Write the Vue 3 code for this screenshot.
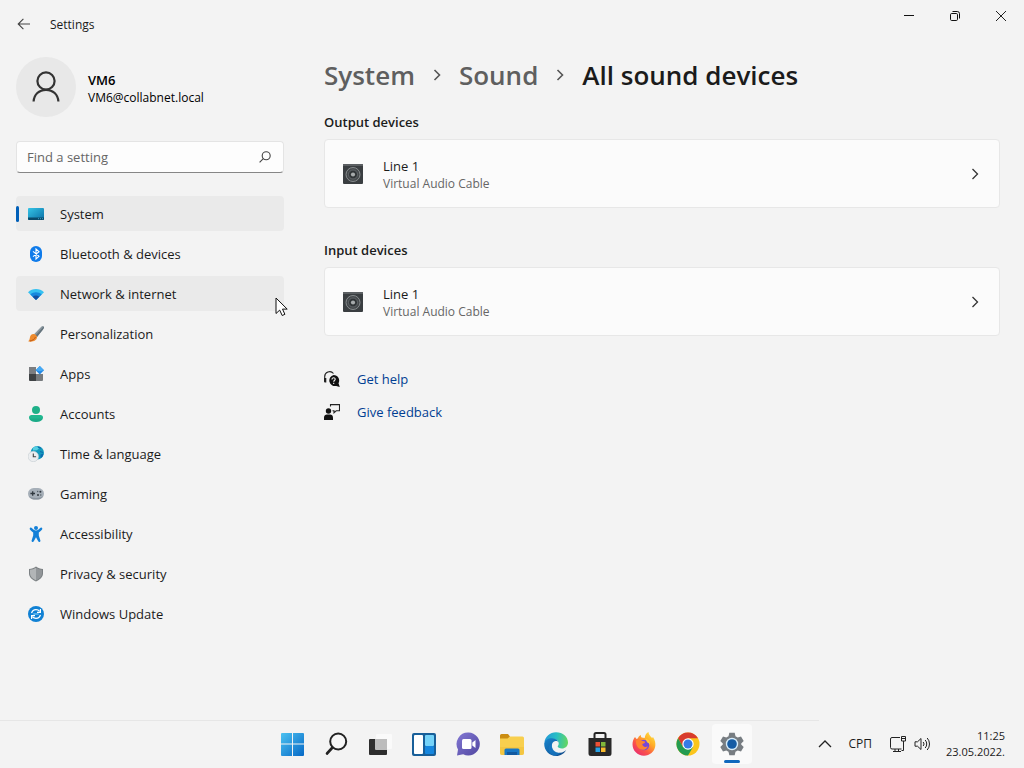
<template>
  <div class="desktop">
    <header class="title-bar">
      <button class="back-button" aria-label="Back">
        <svg viewBox="0 0 14 14" width="14" height="14" fill="none" stroke="#444" stroke-width="1.1">
          <path d="M13 7H1.2M6.4 1.8L1.2 7l5.2 5.2" />
        </svg>
      </button>
      <span class="window-title">Settings</span>
      <div class="window-controls">
        <button aria-label="Minimize">
          <svg viewBox="0 0 12 12" width="12" height="12" stroke="#111" fill="none">
            <path d="M1 5.5h10" />
          </svg>
        </button>
        <button aria-label="Restore">
          <svg viewBox="0 0 12 12" width="12" height="12" stroke="#111" fill="none">
            <rect x="1.5" y="3.5" width="7" height="7" rx="1.2" />
            <path d="M3.5 1.5h4.8a2.2 2.2 0 0 1 2.2 2.2v4.8" />
          </svg>
        </button>
        <button aria-label="Close">
          <svg viewBox="0 0 12 12" width="12" height="12" stroke="#222" fill="none">
            <path d="M1 1l10 10M11 1L1 11" />
          </svg>
        </button>
      </div>
    </header>

    <div class="window-body">
      <aside class="sidebar">
        <div class="account">
          <div class="avatar">
            <svg viewBox="0 0 30 32" width="30" height="32" fill="none" stroke="#333" stroke-width="2.2">
              <circle cx="15" cy="10" r="8.6" />
              <path d="M2.6 30.5C3 23.5 8 18.8 15 18.8s12 4.7 12.4 11.7" />
            </svg>
          </div>
          <div class="account-text">
            <strong>{{ account.name }}</strong>
            <span>{{ account.email }}</span>
          </div>
        </div>

        <div class="search-box">
          <input v-model="query" type="text" placeholder="Find a setting" aria-label="Find a setting" />
          <svg viewBox="0 0 12 12" width="12" height="12" fill="none" stroke="#444" stroke-width="1.1">
            <circle cx="7.2" cy="4.8" r="4" />
            <path d="M4.3 7.7L.6 11.4" />
          </svg>
        </div>

        <nav class="nav-list">
          <a
            v-for="item in navItems"
            :key="item.icon"
            href="#"
            class="nav-item"
            :class="{ active: item.icon === activeItem, hovered: item.icon === hoveredItem }"
            @click.prevent="activeItem = item.icon"
          >
            <svg viewBox="0 0 16 16" width="16" height="16">
              <template v-if="item.icon === 'system'">
                <defs>
                  <linearGradient id="sys" x1="0" y1="0" x2="1" y2="1">
                    <stop offset="0" stop-color="#35c4e6" />
                    <stop offset="1" stop-color="#0a6fa6" />
                  </linearGradient>
                </defs>
                <rect y="2" width="16" height="12" rx="1" fill="url(#sys)" />
                <path d="M0 11.5h16V13a1 1 0 0 1-1 1H1a1 1 0 0 1-1-1z" fill="#0a4a6b" />
                <path d="M10 12.7h1M12 12.7h1M14 12.7h1" stroke="#45b7dc" stroke-width=".8" />
              </template>
              <template v-else-if="item.icon === 'bluetooth'">
                <rect x="2" width="12" height="16" rx="6" fill="#0f7bea" />
                <path d="M5 5.3l6 5-3 2.7V3l3 2.7-6 5" fill="none" stroke="#fff" stroke-width="1.1" />
              </template>
              <template v-else-if="item.icon === 'network'">
                <path d="M0 6.2C4.4 1.8 11.6 1.8 16 6.200L8 14z" fill="#35c1f1" />
                <path d="M2.300 8.500c3.200-3.100 8.200-3.100 11.400 0L8 14z" fill="#1688dd" />
                <path d="M4.700 10.800c1.900-1.800 4.700-1.800 6.600 0L8 14z" fill="#144fa0" />
              </template>
              <template v-else-if="item.icon === 'brush'">
                <path d="M15.600.4c.8.8.2 2.100-.6 3.200L9 11 6 8.200 12.800 1.200c1-.9 2.100-1.500 2.800-.8z" fill="#8b98a0" />
                <path d="M15.600.4c.8.8.2 2.100-.6 3.200L9 11 7.500 9.600z" fill="#64737c" />
                <path d="M5.500 8c2 .1 3.600 1.600 3.500 3.500C8.700 14.500 4.500 16.500 0 15.300c1.800-.8 1.500-2.300 2-4.300C2.500 9.200 3.900 7.900 5.500 8z" fill="#ed8b2e" />
                <path d="M1.800 15c2.700-.4 4.700-1.700 5.700-4" stroke="#bd5918" fill="none" />
              </template>
              <template v-else-if="item.icon === 'apps'">
                <path d="M1 1h7v7H1z" fill="#7b7d80" />
                <path d="M1 8h7v7H2a1 1 0 0 1-1-1z" fill="#3f4244" />
                <path d="M8 8h7v6a1 1 0 0 1-1 1H8z" fill="#777b7e" />
                <path d="M11.800 0l4.200 4.200-4.200 4.200-4.200-4.200z" fill="#2388e5" />
                <path d="M11.800 0l4.200 4.200-4.200 1-4.200-1z" fill="#45aaf5" />
              </template>
              <template v-else-if="item.icon === 'accounts'">
                <circle cx="8" cy="4" r="4" fill="#1eb088" />
                <path d="M3.500 9h9C14 9 15 10 15 11.300 15 14 12.200 16 8 16s-7-2-7-4.700C1 10 2 9 3.500 9z" fill="#20b78f" />
                <path d="M1.300 12.500C2.100 14.700 4.600 16 8 16s5.900-1.300 6.700-3.500z" fill="#159f80" opacity=".5" />
              </template>
              <template v-else-if="item.icon === 'time'">
                <circle cx="9.300" cy="6.700" r="6.700" fill="#159bbd" />
                <path d="M5 1.500l4-1.300 2 2-2 2-4 .4z" fill="#56cfe1" />
                <path d="M12.500 8.500l3-1-.8 3-2.200 1.500z" fill="#0b6baf" />
                <path d="M10 1l3 1.300M12 5.500l3 1" stroke="#0b6baf" stroke-width="1.200" />
                <circle cx="5.300" cy="10.500" r="5.200" fill="#eceef0" stroke="#c3cbd0" stroke-width=".6" />
                <path d="M5.300 7.500v3.300h2.800" fill="none" stroke="#444" stroke-width="1.100" />
              </template>
              <template v-else-if="item.icon === 'gaming'">
                <rect y="2" width="16" height="11.500" rx="5.700" fill="#a6afb8" />
                <path d="M1 10c2.500 2.600 11.500 2.600 14 0-1 2.300-3 3.500-5 3.500H6c-2 0-4-1.200-5-3.500z" fill="#8a949e" />
                <path d="M4.700 5.200v4.600M2.400 7.500H7" stroke="#30383f" stroke-width="1.300" />
                <circle cx="10" cy="9" r="1" fill="#30383f" />
                <circle cx="12.400" cy="5.800" r="1" fill="#30383f" />
                <circle cx="9.700" cy="5.500" r=".7" fill="#4e5962" />
                <circle cx="12.800" cy="9" r=".7" fill="#4e5962" />
              </template>
              <template v-else-if="item.icon === 'accessibility'">
                <circle cx="8" cy="2" r="2" fill="#1380d8" />
                <path d="M2.200 1.700c.8-.3 1.300 0 1.900.6C5.100 3.500 6.300 4.400 8 4.400s2.900-.9 3.900-2.100c.6-.6 1.100-.9 1.900-.6.7.5.7 1.300.1 2-1 1.200-2 2.100-3.100 2.700v3l1.600 5c.3 1.400-1.500 2.200-2.200.8L8 11.200l-2.200 4c-.7 1.400-2.500.6-2.200-.8l1.600-5v-3c-1.100-.6-2.100-1.500-3.100-2.700-.6-.7-.6-1.500.1-2z" fill="#1380d8" />
              </template>
              <template v-else-if="item.icon === 'privacy'">
                <path d="M8 .5c2 1.500 4.300 2.200 7 2.400v4.600c0 3.500-3 6.200-7 8-4-1.800-7-4.500-7-8V2.900C3.700 2.700 6 2 8 .5z" fill="#7b8083" />
                <path d="M8 1.700c1.800 1.200 3.800 1.900 6 2.100v3.700c0 3-2.500 5.200-6 6.900z" fill="#929699" />
                <path d="M8 1.700C6.200 2.900 4.200 3.600 2 3.800v3.700c0 3 2.500 5.200 6 6.900z" fill="#b2b5b7" />
              </template>
              <template v-else>
                <circle cx="8" cy="8" r="8" fill="#1181d4" />
                <path d="M3.600 7.200C4.200 4.900 5.900 3.700 8 3.700c1.500 0 2.800.6 3.700 1.700M12.400 8.800c-.6 2.300-2.300 3.500-4.400 3.500-1.500 0-2.800-.6-3.700-1.700" fill="none" stroke="#fff" stroke-width="1.300" />
                <path d="M12.400 3v3.300H9M3.600 13V9.700H7" fill="none" stroke="#fff" stroke-width="1.200" />
                <path d="M5.300 8h5.400" stroke="#75c4f5" stroke-width="1.400" />
              </template>
            </svg>
            <span>{{ item.label }}</span>
          </a>
        </nav>

        <svg class="cursor" viewBox="0 0 13 20" width="13" height="20">
          <path d="M1 1v15.500l3.700-3.400 2.500 5.400 2.700-1.200-2.400-5.200h4.700z" fill="#fff" stroke="#111" />
        </svg>
      </aside>

      <main class="content">
        <h1 class="breadcrumb">
          <a href="#">System</a>
          <svg viewBox="0 0 8 14" width="8" height="14"><path d="M1.500 2l5 5-5 5" /></svg>
          <a href="#">Sound</a>
          <svg viewBox="0 0 8 14" width="8" height="14"><path d="M1.500 2l5 5-5 5" /></svg>
          <span>All sound devices</span>
        </h1>

        <section v-for="group in deviceGroups" :key="group.title" class="device-group">
          <h2>{{ group.title }}</h2>
          <button class="device-card">
            <svg viewBox="0 0 20 20" width="20" height="20">
              <rect width="20" height="20" rx="1" fill="#3a3e41" />
              <path d="M0 1a1 1 0 0 1 1-1h18a1 1 0 0 1 1 1v1H0z" fill="#5b5f62" />
              <circle cx="10" cy="10.500" r="7" fill="#45494c" stroke="#8d9294" stroke-width=".9" />
              <circle cx="10" cy="10.500" r="4.500" fill="#303437" stroke="#6b7073" stroke-width=".8" />
              <circle cx="10" cy="10.500" r="2.100" fill="#a6aaac" />
            </svg>
            <span class="device-text">
              <span class="device-name">{{ group.device }}</span>
              <span class="device-driver">{{ group.driver }}</span>
            </span>
            <svg viewBox="0 0 8 14" width="8" height="14" fill="none" stroke="#333" stroke-width="1.300">
              <path d="M1.500 2l5 5-5 5" />
            </svg>
          </button>
        </section>

        <div class="help-links">
          <a href="#">
            <svg viewBox="0 0 16 16" width="16" height="16">
              <path d="M.7 9.500V6A5 5 0 0 1 9.500 2.500" fill="none" stroke="#222" stroke-width="1.100" />
              <path d="M0 7h2.300v4.500H1a1 1 0 0 1-1-1z" fill="#222" />
              <path d="M9.600 4a5.600 5.600 0 0 1 4.900 8.300L15.800 16l-3.600-1.100A5.600 5.600 0 1 1 9.600 4z" fill="#111" />
              <path d="M8 8.400c0-2.200 3.300-2 3.200-.1 0 1.200-1.500 1.200-1.500 2.500M9.700 11.700v1.200" fill="none" stroke="#f3f3f3" stroke-width="1.100" />
            </svg>
            <span>Get help</span>
          </a>
          <a href="#">
            <svg viewBox="0 0 16 16" width="16" height="16">
              <circle cx="4.500" cy="7" r="2.700" fill="#111" />
              <path d="M0 16v-2.500C0 11.600 1.300 10.500 3 10.500h3c1.700 0 3 1.100 3 3V16z" fill="#111" />
              <path d="M6.500 2.500V.6h9v6.200h-3.300L10 8.800v-2H8.500" fill="none" stroke="#222" stroke-width="1.100" />
            </svg>
            <span>Give feedback</span>
          </a>
        </div>
      </main>
    </div>

    <footer class="taskbar">
      <div class="task-icons">
        <button aria-label="Start">
          <svg viewBox="0 0 24 24" width="24" height="24">
            <defs>
              <linearGradient id="win" x1="0" y1="0" x2="1" y2="1">
                <stop offset="0" stop-color="#4cc2f1" />
                <stop offset="1" stop-color="#0668c6" />
              </linearGradient>
            </defs>
            <path d="M2 1h10v10.500H1V2a1 1 0 0 1 1-1zM13 1h10a1 1 0 0 1 1 1v9.500H13zM1 12.500h11V24H2a1 1 0 0 1-1-1zM13 12.500h11V23a1 1 0 0 1-1 1H13z" fill="url(#win)" />
          </svg>
        </button>
        <button aria-label="Search">
          <svg viewBox="0 0 24 24" width="24" height="24" fill="none" stroke="#222">
            <circle cx="14.200" cy="9.500" r="8" fill="#f7f7f7" stroke-width="2" />
            <path d="M8.500 15.500l-5.500 6" stroke-width="2.600" stroke-linecap="round" />
          </svg>
        </button>
        <button aria-label="Task view">
          <svg viewBox="0 0 24 24" width="24" height="24">
            <rect x="8" y="2" width="16" height="15" rx="1" fill="#fff" opacity=".6" />
            <rect x="1" y="7" width="18" height="16" rx="1" fill="#2d2d2d" />
            <path d="M7 7h12v11H8a1 1 0 0 1-1-1z" fill="#bcbcbc" />
          </svg>
        </button>
        <button aria-label="Widgets">
          <svg viewBox="0 0 24 24" width="24" height="24">
            <rect width="24" height="23" y="1" rx="2" fill="#185f99" />
            <rect x="2" y="3" width="9" height="19" rx="1" fill="#fff" />
            <rect x="13" y="3" width="9" height="11" rx="1" fill="#75d3f9" />
            <rect x="13" y="14" width="9" height="8" rx="1" fill="#1687df" />
          </svg>
        </button>
        <button aria-label="Chat">
          <svg viewBox="0 0 24 24" width="24" height="24">
            <defs>
              <linearGradient id="chat" x1="0" y1="0" x2="1" y2="1">
                <stop offset="0" stop-color="#8378d4" />
                <stop offset="1" stop-color="#5147a0" />
              </linearGradient>
            </defs>
            <path d="M12.500.5A11.500 11.500 0 1 1 7.200 22.300L1 23.500l1-6A11.500 11.500 0 0 1 12.500.5z" fill="url(#chat)" />
            <rect x="6" y="7" width="9.500" height="10" rx="1.500" fill="#fff" />
            <path d="M16.300 10.500L19.500 8v8l-3.200-2.500z" fill="#fff" />
          </svg>
        </button>
        <button aria-label="File Explorer">
          <svg viewBox="0 0 24 24" width="24" height="24">
            <path d="M0 3.500A1.500 1.500 0 0 1 1.500 2H8l2 2.500L8 7H0z" fill="#cb8d12" />
            <path d="M0 6.500h7.500L10 4.500h12.500A1.500 1.500 0 0 1 24 6v15a2 2 0 0 1-2 2H2a2 2 0 0 1-2-2z" fill="#f8cf4e" />
            <path d="M0 15h24v6a2 2 0 0 1-2 2H2a2 2 0 0 1-2-2z" fill="#f2bf39" opacity=".6" />
            <path d="M4.500 23v-5a1.500 1.500 0 0 1 1.500-1.500h12a1.500 1.500 0 0 1 1.500 1.500v5z" fill="#1877c5" />
            <path d="M7 20h10v3H7z" fill="#12599f" />
          </svg>
        </button>
        <button aria-label="Edge">
          <svg viewBox="0 0 24 24" width="24" height="24">
            <defs>
              <linearGradient id="edgeTop" x1="0" y1=".3" x2="1" y2=".4">
                <stop offset="0" stop-color="#2498d8" />
                <stop offset=".5" stop-color="#27bec5" />
                <stop offset="1" stop-color="#64d662" />
              </linearGradient>
              <linearGradient id="edgeLow" x1="0" y1="0" x2="1" y2="1">
                <stop offset="0" stop-color="#1685cf" />
                <stop offset="1" stop-color="#124886" />
              </linearGradient>
            </defs>
            <path d="M.4 10.500C1 4.500 6 .2 12 .2c7 0 12 4.800 12 10.200 0 3.700-2.800 6-6 6-2.500 0-4.300-.9-4.300-1.900 0-.6 1-1.100 1-3 0-2.300-2.200-4.400-5.800-4.400-4.500 0-7.700 2-8.500 3.400z" fill="url(#edgeTop)" />
            <path d="M.2 11.500C.8 8 4.500 6 8 6.200c3.700.2 6 2 6.600 4.200-.6-1-1.800-1.500-3-1.400-2.300.2-3.800 2.200-3.800 5 0 4.500 4 7.600 8.700 6.800 2.200-.4 4.200-1.400 5.700-2.800-2 3.600-5.600 6-10 6C5.500 24 0 18.500.2 11.500z" fill="url(#edgeLow)" />
            <path d="M8 12c-.8 5.500 3.300 9 8.500 8.800-1.600 1.700-3.700 2.800-6 3C5.800 22.600 3 17.500 5.500 13.500 6.200 12.500 7 12 8 12z" fill="#1679c4" opacity=".7" />
          </svg>
        </button>
        <button aria-label="Store">
          <svg viewBox="0 0 24 24" width="24" height="24">
            <path d="M6.500 7V2.500A1.500 1.500 0 0 1 8 1h8a1.500 1.500 0 0 1 1.500 1.500V7" fill="none" stroke="#252525" stroke-width="2" />
            <path d="M.5 6h23v15.500A2.500 2.500 0 0 1 21 24H3a2.500 2.500 0 0 1-2.500-2.500z" fill="#292929" />
            <path d="M7.500 10H12v4.500H7.500z" fill="#ed5136" />
            <path d="M13 10h4.500v4.500H13z" fill="#80b83b" />
            <path d="M7.500 15.500H12V20H7.500z" fill="#27a1e5" />
            <path d="M13 15.500h4.500V20H13z" fill="#f8ba2d" />
          </svg>
        </button>
        <button aria-label="Firefox">
          <svg viewBox="0 0 24 24" width="24" height="24">
            <defs>
              <linearGradient id="fox" x1="1" y1="0" x2=".2" y2="1">
                <stop offset="0" stop-color="#fff04a" />
                <stop offset=".4" stop-color="#ffac27" />
                <stop offset=".7" stop-color="#fb5548" />
                <stop offset="1" stop-color="#e82b73" />
              </linearGradient>
            </defs>
            <path d="M3 5l1.500 2 1.500-.8C6.500 4.500 7.500 3.500 9 3c-.3 1 0 2 .7 2.500l3 .5C13 3.500 14 1.200 16.500 0c0 2.800 2 4.200 3.600 6L21 5c2 3 2.700 6 2.300 9-.8 5.600-5.500 9.700-11.300 9.700C5.500 23.700.5 18.600.5 12.300.5 9.500 1.500 7 3 5z" fill="url(#fox)" />
            <circle cx="12" cy="13" r="5.300" fill="#7747d8" />
            <path d="M4 8.500c2-1.300 4.500-.8 6 .5 1.300 0 2.800.2 3.300.7-.3 1.500-2 1.900-3 2.300.2 2.500 2.800 3.800 5.500 2.200-1.200 3.300-4 4-6.500 3.400C5.500 16.500 3.500 12 4 8.500z" fill="#ff8430" />
            <path d="M13.500 6.500c3 .8 5 3.500 4.500 6.500-.6-1.500-1.700-2.300-3-2.700z" fill="#ffc83d" />
          </svg>
        </button>
        <button aria-label="Chrome">
          <svg viewBox="0 0 24 24" width="24" height="24">
            <circle cx="12" cy="12" r="11.500" fill="#fbc51c" />
            <path d="M2.040 6.250A11.500 11.500 0 0 1 21.960 6.250H12L7 14.900z" fill="#d83b2d" />
            <path d="M2.040 6.250A11.500 11.500 0 0 0 12 23.500L17 14.900H7z" fill="#239b50" />
            <circle cx="12" cy="12" r="5.700" fill="#fff" />
            <circle cx="12" cy="12" r="4.500" fill="#367be5" />
          </svg>
        </button>
        <button class="running" aria-label="Settings">
          <svg viewBox="0 0 24 24" width="24" height="24">
            <path d="M9.300.8h5.400l.8 3.400 2.200 1.200 3.300-1 2.700 4.600-2.500 2.400v1.200l2.500 2.400-2.700 4.600-3.300-1-2.200 1.200-.8 3.400H9.300l-.8-3.400-2.200-1.200-3.300 1L.3 15l2.500-2.400v-1.200L.3 9 3 4.400l3.300 1 2.200-1.200z" fill="#777d82" />
            <circle cx="12" cy="12" r="6.200" fill="#d7edfb" />
            <circle cx="12" cy="12" r="4.800" fill="#165ca4" />
          </svg>
        </button>
      </div>

      <div class="tray">
        <button class="tray-chevron" aria-label="Show hidden icons">
          <svg viewBox="0 0 14 8" width="14" height="8" fill="none" stroke="#222" stroke-width="1.300">
            <path d="M1 7l6-6 6 6" />
          </svg>
        </button>
        <button class="language">СРП</button>
        <button class="tray-status" aria-label="Network and volume">
          <svg viewBox="0 0 16 16" width="16" height="16" fill="none" stroke="#222">
            <path d="M10 1.500H2A1.500 1.500 0 0 0 .5 3v8.500A1.500 1.500 0 0 0 2 13h9.500M5 13v2.500M3 15.500h8M8.500 13v2.500" />
            <path d="M11.500.5h4v4.500h-4zM11.500 2.500h4M13.500 5v9.500h-2" />
          </svg>
          <svg viewBox="0 0 16 16" width="16" height="16" fill="none" stroke="#222">
            <path d="M1 5.800h2.500L7 2.500v11L3.500 10.200H1z" stroke-linejoin="round" />
            <path d="M9.200 6a3 3 0 0 1 0 4M11.200 4a6 6 0 0 1 0 8M13.200 2a9 9 0 0 1 0 12" />
          </svg>
        </button>
        <button class="clock">
          <span>11:25</span>
          <span>23.05.2022.</span>
        </button>
      </div>
    </footer>
  </div>
</template>

<script setup>
import { ref } from 'vue'

const account = { name: 'VM6', email: 'VM6@collabnet.local' }

const query = ref('')
const activeItem = ref('system')
const hoveredItem = ref('network')

const navItems = [
  { icon: 'system', label: 'System' },
  { icon: 'bluetooth', label: 'Bluetooth & devices' },
  { icon: 'network', label: 'Network & internet' },
  { icon: 'brush', label: 'Personalization' },
  { icon: 'apps', label: 'Apps' },
  { icon: 'accounts', label: 'Accounts' },
  { icon: 'time', label: 'Time & language' },
  { icon: 'gaming', label: 'Gaming' },
  { icon: 'accessibility', label: 'Accessibility' },
  { icon: 'privacy', label: 'Privacy & security' },
  { icon: 'update', label: 'Windows Update' },
]

const deviceGroups = [
  { title: 'Output devices', device: 'Line 1', driver: 'Virtual Audio Cable' },
  { title: 'Input devices', device: 'Line 1', driver: 'Virtual Audio Cable' },
]
</script>

<style>
body {
  margin: 0;
  background-color: #f3f3f3;
}
</style>

<style scoped>
.desktop {
  display: flex;
  flex-direction: column;
  min-height: 100vh;
  background-color: #f3f3f3;
  color: #1b1b1b;
  font-family: 'Segoe UI', 'Open Sans', 'Noto Sans', sans-serif;
  font-size: 13px;
  line-height: 20px;
}

button {
  margin: 0;
  padding: 0;
  border: none;
  background: transparent;
  color: inherit;
  font: inherit;
}

a {
  color: inherit;
  text-decoration: none;
}

svg {
  display: block;
  flex-shrink: 0;
}

/* Title bar */
.title-bar {
  display: flex;
  align-items: center;
  height: 48px;
}

.back-button {
  display: flex;
  justify-content: center;
  width: 48px;
}

.window-title {
  margin-left: 2px;
  padding-top: 2px;
  font-size: 12px;
}

.window-controls {
  display: flex;
  align-self: flex-start;
  margin-left: auto;
}

.window-controls button {
  display: flex;
  align-items: center;
  justify-content: center;
  width: 46px;
  height: 32px;
}

.window-body {
  display: flex;
  flex: 1;
  gap: 40px;
  padding: 9px 24px 0 16px;
}

/* Sidebar */
.sidebar {
  position: relative;
  flex: 0 0 268px;
}

.account {
  display: flex;
  align-items: center;
  gap: 12px;
}

.avatar {
  display: flex;
  align-items: center;
  justify-content: center;
  width: 60px;
  height: 60px;
  border-radius: 50%;
  background-color: #e8e8e8;
}

.account-text {
  display: flex;
  flex-direction: column;
  padding-top: 3px;
  font-size: 12px;
  line-height: 18px;
  color: #000;
}

.account-text strong {
  font-size: 13px;
  font-weight: 600;
}

.search-box {
  display: flex;
  align-items: center;
  box-sizing: border-box;
  height: 32px;
  margin: 24px 0 23px;
  padding: 0 12px 0 10px;
  border: 1px solid #e4e4e4;
  border-bottom-color: #868686;
  border-radius: 4px;
  background-color: #fdfdfd;
}

.search-box input {
  flex: 1;
  min-width: 0;
  padding: 0;
  border: none;
  outline: none;
  background: transparent;
  color: #1b1b1b;
  font: inherit;
}

.search-box input::placeholder {
  color: #666;
  opacity: 1;
}

.nav-list {
  display: flex;
  flex-direction: column;
  gap: 5px;
}

.nav-item {
  display: flex;
  align-items: center;
  gap: 16px;
  height: 35px;
  padding-left: 12px;
  border-radius: 4px;
}

.nav-item.active,
.nav-item.hovered,
.nav-item:hover {
  background-color: #eaeaea;
}

/* accent bar, pulled to the left edge so it takes no room in the row */
.nav-item.active::before {
  content: '';
  width: 3px;
  height: 16px;
  margin: 0 -7px 0 -12px;
  border-radius: 2px;
  background-color: #005fb8;
}

.cursor {
  position: absolute;
  top: 240px;
  right: -4px;
}

/* Content */
.content {
  flex: 1;
  min-width: 0;
}

.breadcrumb {
  display: flex;
  align-items: center;
  gap: 18px;
  margin: 0;
  font-size: 26px;
  font-weight: 600;
  line-height: 36px;
}

.breadcrumb a {
  color: #5f5f5f;
}

.breadcrumb svg {
  fill: none;
  stroke: #555;
  stroke-width: 1.6;
}

.device-group {
  margin-top: 19px;
}

.device-group + .device-group {
  margin-top: 32px;
}

.device-group h2 {
  margin: 0 0 7px;
  font-size: 13px;
  font-weight: 600;
}

.device-card {
  display: flex;
  align-items: center;
  gap: 20px;
  box-sizing: border-box;
  width: 100%;
  height: 69px;
  padding: 0 20px 0 18px;
  border: 1px solid #e7e7e7;
  border-radius: 4px;
  background-color: #fbfbfb;
  text-align: left;
}

.device-text {
  display: flex;
  flex: 1;
  flex-direction: column;
  padding-top: 2px;
  line-height: 18px;
}

.device-driver {
  color: #666;
  font-size: 12px;
}

.help-links {
  display: flex;
  flex-direction: column;
  align-items: flex-start;
  gap: 13px;
  margin-top: 33px;
}

.help-links a {
  display: flex;
  align-items: center;
  gap: 17px;
  color: #003e92;
}

/* Taskbar */
.taskbar {
  position: relative;
  display: grid;
  grid-template-columns: 1fr auto 1fr;
  height: 48px;
}

.taskbar::before {
  content: '';
  position: absolute;
  top: 0;
  left: 0;
  width: 80%;
  height: 1px;
  background-color: #e6e6e6;
}

.task-icons {
  display: flex;
  grid-column: 2;
  align-items: center;
  gap: 4px;
}

.task-icons button {
  position: relative;
  display: flex;
  align-items: center;
  justify-content: center;
  width: 40px;
  height: 40px;
  border-radius: 4px;
}

.task-icons .running {
  background-color: #fafafa;
}

.running::after {
  content: '';
  position: absolute;
  bottom: 1px;
  left: 12px;
  width: 16px;
  height: 3px;
  border-radius: 2px;
  background-color: #0f68bd;
}

.tray {
  display: flex;
  align-items: center;
  justify-content: flex-end;
  padding-right: 19px;
  font-size: 11px;
}

.language {
  margin-left: 16px;
  font-size: 12px;
}

.tray-status {
  display: flex;
  gap: 8px;
  margin-left: 18px;
}

.clock {
  display: flex;
  flex-direction: column;
  align-items: flex-end;
  margin-left: 16px;
  line-height: 16px;
}
</style>
